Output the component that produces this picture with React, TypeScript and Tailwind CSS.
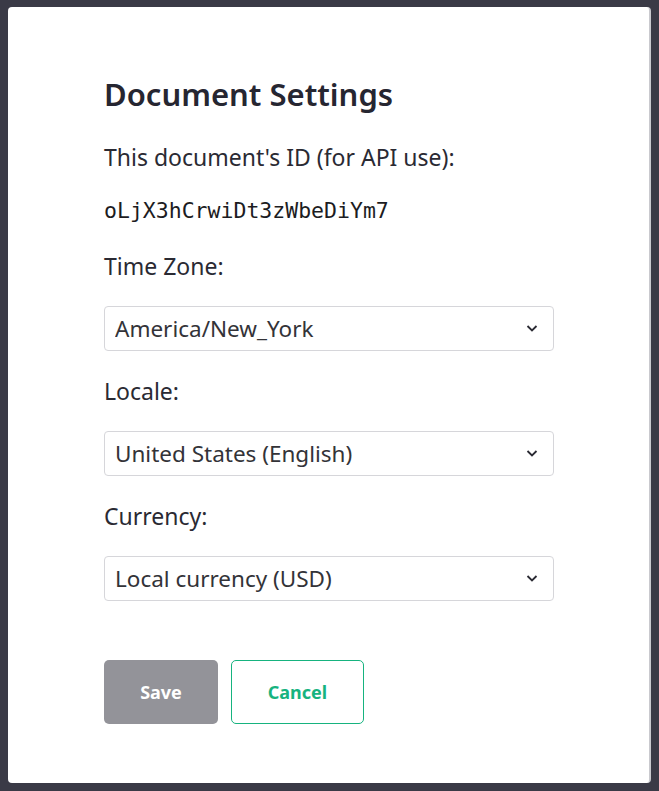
import React, { useState } from 'react';

const fieldFont = { fontFamily: '"Noto Sans", "Open Sans", sans-serif' };

interface SelectFieldProps {
    label: string;
    value: string;
    options: string[];
    onChange: (v: string) => void;
}

const SelectField: React.FC<SelectFieldProps> = ({ label, value, options, onChange }) => (
    <div className="mt-[25px]">
        <label className="block text-[23px] leading-[30px] text-[#2a2a33]">{label}</label>
        <div className="relative mt-[25px] w-[450px]">
            <select
                value={value}
                onChange={(e) => onChange(e.target.value)}
                className="block w-full h-[45px] appearance-none rounded-[4px] border border-[#d6d6da] bg-white pl-[10px] pr-10 text-[22.5px] text-[#333338] outline-none"
                style={fieldFont}
            >
                {options.map((o) => (
                    <option key={o}>{o}</option>
                ))}
            </select>
            <svg
                className="pointer-events-none absolute right-[16px] top-[18px]"
                width="12"
                height="9"
                viewBox="0 0 12 9"
                fill="none"
            >
                <path d="M1.5 2 6 6.5 10.5 2" stroke="#2a2a33" strokeWidth="1.8" />
            </svg>
        </div>
    </div>
);

export default function App() {
    const [zone, setZone] = useState('America/New_York');
    const [locale, setLocale] = useState('United States (English)');
    const [currency, setCurrency] = useState('Local currency (USD)');

    return (
        <div className="min-h-[791px] bg-[#3a3a46] px-[8px] pt-[7px]" style={fieldFont}>
            <div className="w-[643px] h-[776px] rounded-[4px] border-r-2 border-[#c9c9ce] bg-white pl-[96px] pt-[67px] text-[#2a2a33]">
                {/* Header */}
                <h1 className="text-[31px] leading-[40px] font-semibold text-[#262631]">Document Settings</h1>

                <p className="mt-[28px] text-[23px] leading-[30px]">This document's ID (for API use):</p>
                <p
                    className="mt-[24px] text-[21.5px] leading-[30px] text-[#1c1c22]"
                    style={{ fontFamily: '"DejaVu Sans Mono", "Liberation Mono", monospace' }}
                >
                    oLjX3hCrwiDt3zWbeDiYm7
                </p>

                <SelectField
                    label="Time Zone:"
                    value={zone}
                    options={['America/New_York', 'America/Chicago', 'Europe/London']}
                    onChange={setZone}
                />
                <SelectField
                    label="Locale:"
                    value={locale}
                    options={['United States (English)', 'United Kingdom (English)']}
                    onChange={setLocale}
                />
                <SelectField
                    label="Currency:"
                    value={currency}
                    options={['Local currency (USD)', 'Euro (EUR)']}
                    onChange={setCurrency}
                />

                {/* Buttons */}
                <div className="mt-[59px] flex gap-[13px]">
                    <button className="w-[114px] h-[64px] rounded-[5px] bg-[#939399] text-[18px] font-bold text-white">
                        Save
                    </button>
                    <button className="w-[133px] h-[64px] rounded-[5px] border border-[#16b37f] bg-white text-[18px] font-bold text-[#16b37f]">
                        Cancel
                    </button>
                </div>
            </div>
        </div>
    );
}
